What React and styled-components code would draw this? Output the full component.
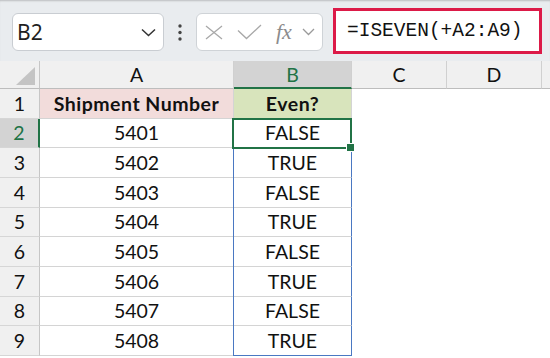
import React from 'react'
import styled, { createGlobalStyle } from 'styled-components'

const GREEN = '#217346'
const BLUE = '#4a78c2'
const GRID = '#d4d4d4'
const CELL_FONT = `Lato, "Noto Sans", sans-serif`

const GlobalStyle = createGlobalStyle`
  body {
    margin: 0;
    background: #fff;
    font-family: "Noto Sans", sans-serif;
  }
`

const rows = [5401, 5402, 5403, 5404, 5405, 5406, 5407, 5408]

function App() {
  return (
    <Page>
      <GlobalStyle />
      <Toolbar>
        <NameBox>
          <NameText>B2</NameText>
          <svg width="15" height="9" viewBox="0 0 15 9">
            <path d="M1 1.5 L7.5 7.5 L14 1.5" stroke="#333" strokeWidth="1.5" fill="none" />
          </svg>
        </NameBox>
        <Dots>
          <svg width="4" height="17" viewBox="0 0 4 17">
            <circle cx="2" cy="2" r="1.7" fill="#444" />
            <circle cx="2" cy="8.5" r="1.7" fill="#444" />
            <circle cx="2" cy="15" r="1.7" fill="#444" />
          </svg>
        </Dots>
        <FxBox>
          <svg width="18" height="15" viewBox="0 0 18 15">
            <path d="M1 1 L17 14 M17 1 L1 14" stroke="#a8a8a8" strokeWidth="1.3" fill="none" />
          </svg>
          <svg width="25" height="16" viewBox="0 0 25 16">
            <path d="M1 6.5 L9.5 14.5 L24 1" stroke="#a8a8a8" strokeWidth="1.3" fill="none" />
          </svg>
          <FxLabel>fx</FxLabel>
          <svg width="13" height="8" viewBox="0 0 13 8">
            <path d="M1 1 L6.5 6.5 L12 1" stroke="#9a9a9a" strokeWidth="1.3" fill="none" />
          </svg>
        </FxBox>
        <FormulaInput>=ISEVEN(+A2:A9)</FormulaInput>
      </Toolbar>

      <Sheet>
        <Corner>
          <svg width="19" height="18" viewBox="0 0 19 18">
            <path d="M19 0 L19 18 L0 18 Z" fill="#c4c4c4" />
          </svg>
        </Corner>
        <ColHeader>A</ColHeader>
        <ColHeader $selected>B</ColHeader>
        <ColHeader>C</ColHeader>
        <ColHeader>D</ColHeader>
        <ColHeader $last />

        <RowHeader>1</RowHeader>
        <Cell $bg="#f2dcdb" $bold>Shipment Number</Cell>
        <Cell $bg="#d8e4bc" $bold>Even?</Cell>
        <Blank />
        <Blank />
        <Blank />

        {rows.map((num, i) => {
          const rowNo = i + 2
          const active = rowNo === 2
          return (
            <React.Fragment key={num}>
              <RowHeader $selected={active}>{rowNo}</RowHeader>
              <Cell>{num}</Cell>
              <Cell $spill $spillEnd={i === rows.length - 1} $active={active}>
                {num % 2 === 0 ? 'TRUE' : 'FALSE'}
                {active && (
                  <>
                    <Selection />
                    <FillHandle />
                  </>
                )}
              </Cell>
              <Blank />
              <Blank />
              <Blank />
            </React.Fragment>
          )
        })}
      </Sheet>
    </Page>
  )
}

const Page = styled.div`
  width: 550px;
  height: 358px;
  overflow: hidden;
  background: #fff;
`

const Toolbar = styled.div`
  height: 61px;
  box-sizing: border-box;
  display: flex;
  align-items: center;
  padding: 1px 0 0 12px;
  background: #e9ecef;
  box-shadow: inset 0 2px 2px -1px rgba(0, 0, 0, 0.2);
`

const NameBox = styled.div`
  width: 152px;
  height: 38px;
  box-sizing: border-box;
  display: flex;
  align-items: center;
  justify-content: space-between;
  padding: 0 7px 0 4px;
  margin-top: 2px;
  background: #fff;
  border: 1px solid #c9cdd2;
  border-radius: 6px;
`

const NameText = styled.span`
  font-family: "Noto Sans", sans-serif;
  font-size: 21px;
  line-height: 1;
  color: #1f1f1f;
`

const Dots = styled.div`
  width: 32px;
  display: flex;
  justify-content: center;
  margin-top: 2px;
`

const FxBox = styled.div`
  width: 127px;
  height: 38px;
  box-sizing: border-box;
  display: flex;
  align-items: center;
  gap: 14px;
  padding-left: 8px;
  margin-top: 2px;
  background: #fff;
  border: 1px solid #cfd3d7;
  border-radius: 6px;

  svg:last-child {
    margin-left: -4px;
  }
`

const FxLabel = styled.span`
  font-family: "Liberation Serif", serif;
  font-style: italic;
  font-size: 22px;
  color: #8c8c8c;
  line-height: 1;
`

const FormulaInput = styled.div`
  width: 209px;
  height: 46px;
  box-sizing: border-box;
  margin-left: 10px;
  display: flex;
  align-items: center;
  padding-left: 11px;
  background: #fff;
  border: 3px solid #dc1a48;
  font-family: "Liberation Mono", monospace;
  font-size: 19.5px;
  color: #111;
`

const Sheet = styled.div`
  display: grid;
  grid-template-columns: 40px 194px 118px 95px 95px 1fr;
  grid-template-rows: 28px repeat(9, 29.667px);
  font-family: ${CELL_FONT};
  font-size: 19.5px;
  color: #111;
`

const Corner = styled.div`
  display: flex;
  align-items: flex-end;
  justify-content: flex-end;
  padding: 0 4px 3px 0;
  box-sizing: border-box;
  background: #f0f0f0;
  border-right: 1px solid #c6c6c6;
  border-bottom: 1px solid #bdbdbd;
`

const ColHeader = styled.div`
  display: flex;
  align-items: center;
  justify-content: center;
  box-sizing: border-box;
  background: ${(p) => (p.$selected ? '#d3d3d3' : '#f0f0f0')};
  color: ${(p) => (p.$selected ? GREEN : '#111')};
  border-right: ${(p) => (p.$last ? 'none' : '1px solid #d0d0d0')};
  border-bottom: ${(p) => (p.$selected ? `2px solid ${GREEN}` : '1px solid #bdbdbd')};
  padding-top: ${(p) => (p.$selected ? '1px' : '0')};
`

const RowHeader = styled.div`
  display: flex;
  align-items: center;
  justify-content: center;
  box-sizing: border-box;
  background: ${(p) => (p.$selected ? '#d3d3d3' : '#f0f0f0')};
  color: ${(p) => (p.$selected ? GREEN : '#111')};
  border-right: ${(p) => (p.$selected ? `2px solid ${GREEN}` : '1px solid #c6c6c6')};
  border-bottom: 1px solid #d6d6d6;
`

const Cell = styled.div`
  position: relative;
  display: flex;
  align-items: center;
  justify-content: center;
  box-sizing: border-box;
  background: ${(p) => p.$bg || '#fff'};
  font-weight: ${(p) => (p.$bold ? 700 : 400)};
  letter-spacing: ${(p) => (p.$bold ? '0.5px' : '0')};
  border-right: 1px solid ${(p) => (p.$spill ? BLUE : GRID)};
  border-bottom: 1px solid ${(p) => (p.$spillEnd ? BLUE : GRID)};
  box-shadow: ${(p) => (p.$spill ? `-1px 0 0 ${BLUE}` : 'none')};
  z-index: ${(p) => (p.$active ? 2 : 'auto')};
`

const Blank = styled.div`
  background: #fff;
`

const Selection = styled.span`
  position: absolute;
  top: -1px;
  left: -2px;
  right: -1px;
  bottom: -2px;
  border: 2px solid ${GREEN};
  pointer-events: none;
`

const FillHandle = styled.span`
  position: absolute;
  right: -4px;
  bottom: -5px;
  width: 7px;
  height: 7px;
  background: ${GREEN};
  border: 1px solid #fff;
`

export default App
